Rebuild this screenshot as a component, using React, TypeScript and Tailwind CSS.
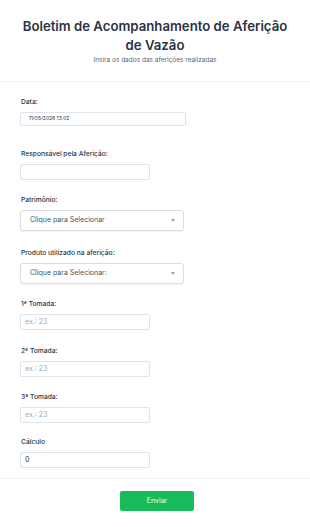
import React from 'react';

const font = { fontFamily: 'Inter, "Noto Sans", sans-serif' };

type FieldProps = {
  label: string;
  top: string;
  children: React.ReactNode;
};

const Field: React.FC<FieldProps> = ({ label, top, children }) => (
  <div className={top}>
    <div className="text-[6.7px] leading-[10px] font-medium text-[#2c3345] mb-[5px] pl-px">{label}</div>
    {children}
  </div>
);

const TextBox: React.FC<{ value?: string; placeholder?: string; wide?: boolean }> = ({ value, placeholder, wide }) => (
  <div
    className={
      (wide ? 'w-[166px] h-[14px]' : 'w-[130px] h-[16px]') +
      ' border border-[#dfe3ea] rounded-[2px] bg-white flex items-center px-[4px]'
    }
  >
    {value ? (
      <span className={wide ? 'text-[5px] pl-[4px] text-[#2c3345]' : 'text-[7px] text-[#2c3345]'}>{value}</span>
    ) : (
      <span className="text-[7px] text-[#a0a8b8]">{placeholder}</span>
    )}
  </div>
);

const SelectBox: React.FC<{ text: string }> = ({ text }) => (
  <div className="w-[164px] h-[21px] border border-[#d8dde6] rounded-[3px] bg-white shadow-[0_1px_2px_rgba(0,0,0,0.06)] flex items-center justify-between pl-[9px] pr-[8px]">
    <span className="text-[7px] text-[#4a5160]">{text}</span>
    <svg width="4" height="3" viewBox="0 0 4 3">
      <path d="M0 0 L4 0 L2 3 Z" fill="#9aa3b3" />
    </svg>
  </div>
);

export default function App() {
  return (
    <div className="w-[310px] min-h-[527px] bg-white" style={font}>
      <div className="pt-[17px] pb-[17px] px-[20px] border-b border-[#eef0f3] text-center">
        <h1 className="text-[13.2px] leading-[19px] font-semibold text-[#2c3345]">
          Boletim de Acompanhamento de Aferição de Vazão
        </h1>
        <p className="mt-px text-[6.5px] leading-[8px] text-[#57647e]">Insira os dados das aferições realizadas</p>
      </div>

      <div className="px-[20px] pb-[10px]">
        <Field label="Data:" top="pt-[15px]">
          <TextBox value="11/05/2026 13:02" wide />
        </Field>
        <Field label="Responsável pela Aferição:" top="pt-[23px]">
          <TextBox />
        </Field>
        <Field label="Patrimônio:" top="pt-[15px]">
          <SelectBox text="Clique para Selecionar" />
        </Field>
        <Field label="Produto utilizado na aferição:" top="pt-[17px]">
          <SelectBox text="Clique para Selecionar:" />
        </Field>
        <Field label="1ª Tomada:" top="pt-[15px]">
          <TextBox placeholder="ex.: 23" />
        </Field>
        <Field label="2ª Tomada:" top="pt-[16px]">
          <TextBox placeholder="ex.: 23" />
        </Field>
        <Field label="3ª Tomada:" top="pt-[15px]">
          <TextBox placeholder="ex.: 23" />
        </Field>
        <Field label="Cálculo" top="pt-[14px]">
          <TextBox value="0" />
        </Field>
      </div>

      <div className="border-t border-[#eef0f3] pt-[12px] flex justify-center pl-[4px]">
        <button className="w-[74px] h-[20px] bg-[#18bd5b] rounded-[2px] text-[7px] text-[#e8f8ee]">Enviar</button>
      </div>
    </div>
  );
}
